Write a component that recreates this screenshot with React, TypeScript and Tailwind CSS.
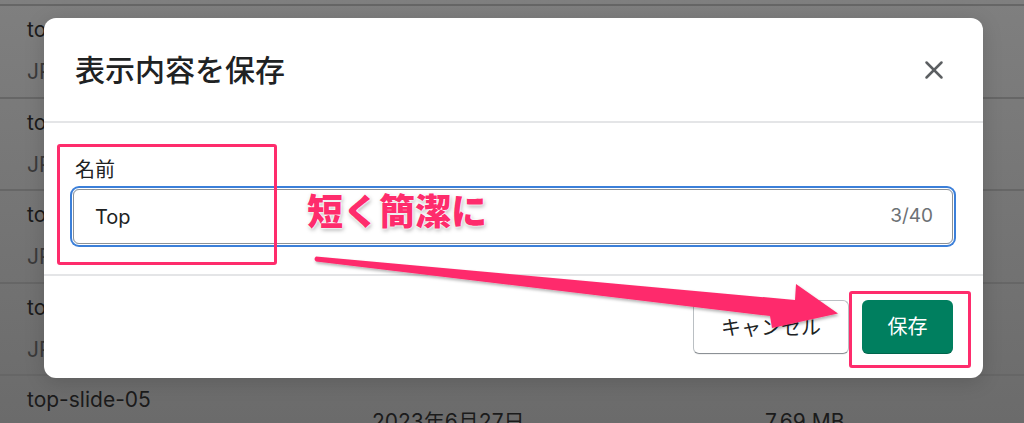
import { X } from 'lucide-react'

const rows = [
  { name: 'top-slide-01', date: '2023年6月27日', size: '7.12 MB' },
  { name: 'top-slide-02', date: '2023年6月27日', size: '6.98 MB' },
  { name: 'top-slide-03', date: '2023年6月27日', size: '7.45 MB' },
  { name: 'top-slide-04', date: '2023年6月27日', size: '7.03 MB' },
  { name: 'top-slide-05', date: '2023年6月27日', size: '7.69 MB' },
]

function App() {
  return (
    <div className="relative h-[423px] w-[1024px] overflow-hidden bg-gradient-to-b from-[#7f7f7f] to-[#6b6b6b] font-['Inter','Noto_Sans_CJK_JP',sans-serif]">
      {/* Table behind the overlay */}
      <div className="flex flex-col pt-[4px]">
        {rows.map((row) => (
          <div
            key={row.name}
            className="flex h-[92.5px] shrink-0 items-center border-t-2 border-[#666666] pl-[27px] text-[21px] text-[#1b1b1b]"
          >
            <div className="flex w-[345px] flex-col gap-[18px] leading-[24px]">
              <span>{row.name}</span>
              <span className="text-[#3a3a3a]">JPG</span>
            </div>
            <span className="mt-[2px] w-[393px] leading-[24px]">{row.date}</span>
            <span className="mt-[2px] leading-[24px]">{row.size}</span>
          </div>
        ))}
      </div>

      {/* Modal */}
      <div className="absolute left-[44px] top-[18px] flex h-[360px] w-[939px] flex-col rounded-[12px] bg-white shadow-[0_4px_20px_rgba(0,0,0,0.15)]">
        <div className="flex h-[103px] items-center justify-between pl-[31px] pr-[34px]">
          <h2 className="text-[30px] font-medium leading-[36px] text-[#202223]">表示内容を保存</h2>
          <X size={30} strokeWidth={2} className="text-[#5c5f62]" />
        </div>
        <div className="h-[2px] bg-[#e4e5e7]" />
        <div className="flex flex-col pb-[30px] pl-[29px] pr-[30px] pt-[35px]">
          <label className="pl-[2px] text-[20px] leading-[24px] text-[#202223]">名前</label>
          <div className="mt-[7px] flex h-[55px] items-center justify-between rounded-[6px] border border-[#8c9196] pl-[21px] pr-[19px] shadow-[0_0_0_1px_#ffffff,0_0_0_3px_#3b7fd9]">
            <span className="text-[20px] text-[#202223]">Top</span>
            <span className="text-[19px] text-[#6d7175]">3/40</span>
          </div>
        </div>
        <div className="h-[2px] bg-[#e4e5e7]" />
        <div className="flex flex-1 items-start justify-end gap-[13px] pr-[30px] pt-[24px]">
          <button className="h-[54px] w-[156px] rounded-[6px] border border-[#babfc3] border-b-[#8c9196] bg-white pt-[2px] text-[20px] text-[#202223] shadow-[0_1px_0_rgba(0,0,0,0.05)]">
            キャンセル
          </button>
          <button className="h-[54px] w-[91px] rounded-[6px] bg-[#007f5f] text-[20px] text-white shadow-[inset_0_-1px_0_rgba(0,0,0,0.2)]">
            保存
          </button>
        </div>
      </div>

      {/* Annotations */}
      <div className="absolute left-[57px] top-[144px] h-[121px] w-[220px] rounded-[3px] border-[3px] border-[#fe2c6c]" />
      <div className="absolute left-[849px] top-[291px] h-[77px] w-[122px] rounded-[3px] border-[3px] border-[#fe2c6c]" />
      <div className="absolute left-[307px] top-[194px] text-[36px] font-black leading-[36px] text-[#fe2c6c] [text-shadow:0_0_2px_#fff,0_0_2px_#fff,0_0_3px_#fff,1px_2px_4px_rgba(0,0,0,0.35)]">
        短く簡潔に
      </div>
      <svg
        className="pointer-events-none absolute left-0 top-0"
        width="1024"
        height="423"
        viewBox="0 0 1024 423"
      >
        <defs>
          <filter id="arrowShadow" x="-10%" y="-50%" width="120%" height="200%">
            <feDropShadow dx="1" dy="2" stdDeviation="1.5" floodColor="#000" floodOpacity="0.3" />
          </filter>
        </defs>
        <path
          d="M316 256.5 L795 300 L796 284 L838 313.5 L772 328 L770 316 L316 261.5 Q313 259 316 256.5 Z"
          fill="#fe2c6c"
          filter="url(#arrowShadow)"
        />
      </svg>
    </div>
  )
}

export default App
